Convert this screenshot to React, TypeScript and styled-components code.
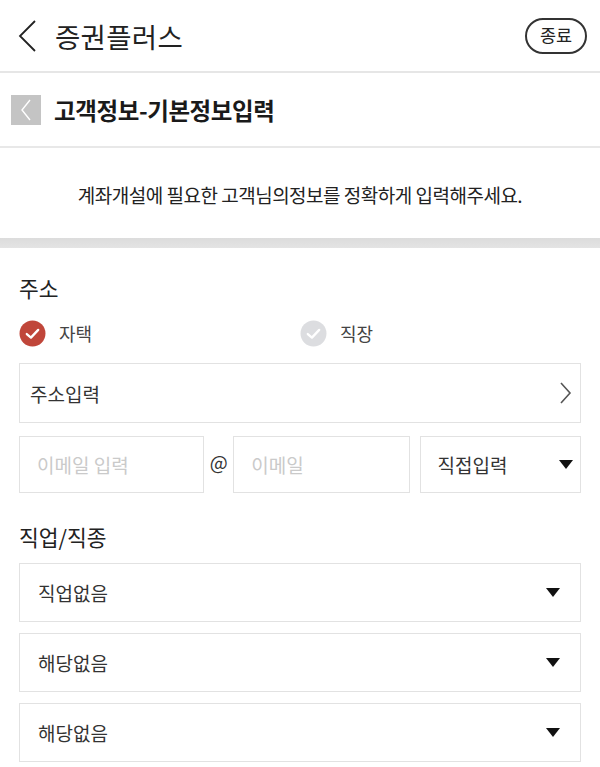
import * as React from 'react'
import styled, { createGlobalStyle } from 'styled-components'

const GlobalStyle = createGlobalStyle`
  html, body {
    margin: 0;
    padding: 0;
    background: #fff;
    font-family: "Noto Sans CJK KR", "Noto Sans", sans-serif;
    color: #222;
  }
  * { box-sizing: border-box; }
`

const Page = styled.div`
  width: 600px;
  height: 767px;
  overflow: hidden;
  background: #fff;
`

const TopBar = styled.header`
  height: 73px;
  display: flex;
  align-items: center;
  padding: 0 13px 0 17px;
  border-bottom: 2px solid #e6e6e6;
`

const BackButton = styled.button`
  border: 0;
  background: none;
  padding: 0;
  width: 22px;
  height: 34px;
  display: flex;
  align-items: center;
  cursor: pointer;
`

const AppTitle = styled.h1`
  flex: 1;
  margin: 0 0 0 16px;
  font-size: 27.5px;
  font-weight: 400;
  letter-spacing: 0.3px;
  color: #222;
`

const CloseButton = styled.button`
  width: 62px;
  height: 36px;
  border: 2px solid #333;
  border-radius: 18px;
  background: #fff;
  font-family: inherit;
  font-size: 17.5px;
  color: #222;
  padding: 0 0 2px;
  cursor: pointer;
`

const SubBar = styled.div`
  height: 75px;
  display: flex;
  align-items: center;
  padding-left: 11px;
  border-bottom: 2px solid #e8e8e8;
`

const SmallBack = styled.span`
  width: 30px;
  height: 30px;
  background: #c4c4c4;
  display: flex;
  align-items: center;
  justify-content: center;
`

const SubTitle = styled.h2`
  margin: 0 0 0 13px;
  font-size: 23.5px;
  font-weight: 700;
  color: #1a1a1a;
  letter-spacing: -0.4px;
`

const Notice = styled.p`
  margin: 0;
  height: 90px;
  display: flex;
  align-items: center;
  justify-content: center;
  font-size: 19px;
  color: #222;
  letter-spacing: -0.5px;
  padding-top: 2px;
`

const Divider = styled.div`
  height: 10px;
  background: linear-gradient(#dcdcdc, #e4e4e4);
`

const Form = styled.section`
  padding: 0 19px;
`

const Label = styled.div<{ $top: number }>`
  margin-top: ${p => p.$top}px;
  font-size: 21.5px;
  color: #222;
  line-height: 28px;
`

const RadioRow = styled.div`
  display: grid;
  grid-template-columns: 281px 1fr;
  margin-top: 17px;
  height: 28px;
`

const RadioItem = styled.label`
  display: flex;
  align-items: center;
  gap: 13px;
  font-size: 18px;
  color: #444;
`

const Field = styled.div<{ $top: number }>`
  margin-top: ${p => p.$top}px;
  height: 60px;
  border: 1.5px solid #e2e2e2;
  display: flex;
  align-items: center;
  justify-content: space-between;
  padding: 0 8px 0 10px;
  font-size: 19px;
  color: #333;
`

const EmailRow = styled.div`
  display: flex;
  align-items: center;
  margin-top: 13px;
  height: 57px;
`

const Box = styled.div<{ $w: number; $muted?: boolean }>`
  width: ${p => p.$w}px;
  height: 100%;
  border: 1.5px solid #e2e2e2;
  display: flex;
  align-items: center;
  justify-content: space-between;
  padding: 0 7px 0 17px;
  font-size: 19px;
  color: ${p => (p.$muted ? '#cacaca' : '#333')};
`

const At = styled.span`
  width: 29px;
  text-align: center;
  font-size: 19px;
  color: #333;
  padding-bottom: 6px;
`

const Select = styled(Field)`
  height: 59px;
  padding: 0 20px 0 18px;
`

const Chevron = ({ color = '#333', w = 1.6 }: { color?: string; w?: number }) => (
  <svg width="20" height="34" viewBox="0 0 20 34">
    <polyline points="18,2 3,17 18,32" fill="none" stroke={color} strokeWidth={w} />
  </svg>
)

const Caret = () => (
  <svg width="14" height="9" viewBox="0 0 14 9">
    <polygon points="0,0 14,0 7,9" fill="#111" />
  </svg>
)

const Check = ({ on }: { on: boolean }) => (
  <svg width="27" height="27" viewBox="0 0 26 26">
    <circle cx="13" cy="13" r="12.5" fill={on ? '#c0463a' : '#dcdde0'} />
    <polyline
      points="7.5,13.5 11.5,17 18.5,9.5"
      fill="none"
      stroke="#fff"
      strokeWidth="2.2"
      strokeLinecap="round"
      strokeLinejoin="round"
    />
  </svg>
)

export default function App() {
  return (
    <Page>
      <GlobalStyle />
      <TopBar>
        <BackButton aria-label="뒤로">
          <Chevron color="#222" w={1.8} />
        </BackButton>
        <AppTitle>증권플러스</AppTitle>
        <CloseButton>종료</CloseButton>
      </TopBar>
      <SubBar>
        <SmallBack>
          <svg width="12" height="22" viewBox="0 0 12 22">
            <polyline points="10,1 2,11 10,21" fill="none" stroke="#fff" strokeWidth="1.4" />
          </svg>
        </SmallBack>
        <SubTitle>고객정보-기본정보입력</SubTitle>
      </SubBar>
      <Notice>계좌개설에 필요한 고객님의정보를 정확하게 입력해주세요.</Notice>
      <Divider />
      <Form>
        <Label $top={26}>주소</Label>
        <RadioRow>
          <RadioItem>
            <Check on />
            자택
          </RadioItem>
          <RadioItem>
            <Check on={false} />
            직장
          </RadioItem>
        </RadioRow>
        <Field $top={16}>
          주소입력
          <svg width="12" height="22" viewBox="0 0 12 22">
            <polyline points="1,1 10,11 1,21" fill="none" stroke="#555" strokeWidth="1.6" />
          </svg>
        </Field>
        <EmailRow>
          <Box $w={186} $muted>이메일 입력</Box>
          <At>@</At>
          <Box $w={177} $muted>이메일</Box>
          <Box $w={162} style={{ marginLeft: 10 }}>
            직접입력
            <Caret />
          </Box>
        </EmailRow>
        <Label $top={30}>직업/직종</Label>
        <Select $top={12}>
          직업없음
          <Caret />
        </Select>
        <Select $top={11}>
          해당없음
          <Caret />
        </Select>
        <Select $top={11}>
          해당없음
          <Caret />
        </Select>
      </Form>
    </Page>
  )
}
